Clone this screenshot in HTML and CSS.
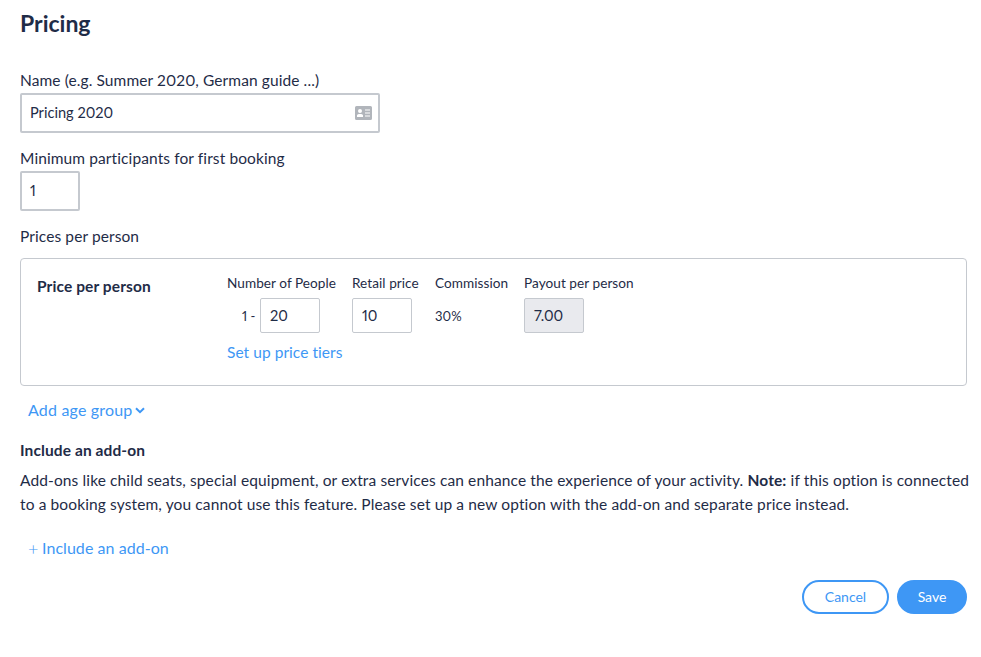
FILE: index.html
```html
<!DOCTYPE html>
<html lang="en">
<head>
<meta charset="utf-8">
<title>Pricing</title>
<link rel="stylesheet" href="styles.css">
</head>
<body>
<main class="page">
  <h1 class="title">Pricing</h1>
  <label class="label label-name">Name (e.g. Summer 2020, German guide ...)</label>
  <div class="field field-name">
    <span class="field-text">Pricing 2020</span>
    <svg class="card-icon" width="17" height="14" viewBox="0 0 17 14"><path fill="#b1b5bb" fill-rule="evenodd" d="M1.5 0h14A1.5 1.5 0 0 1 17 1.5v11a1.5 1.5 0 0 1-1.500 1.500h-14A1.500 1.500 0 0 1 0 12.500v-11A1.500 1.500 0 0 1 1.500 0zM5 3a2 2 0 1 0 0 4 2 2 0 0 0 0-4zM2 11h6V9.500C8 8.500 7 8 5 8S2 8.500 2 9.500zM10 3.500v1h5v-1zM10 6.500v1h5v-1zM10 9.500v1h5v-1z"/></svg>
  </div>
  <label class="label label-min">Minimum participants for first booking</label>
  <div class="field field-min"><span class="field-text">1</span></div>
  <label class="label label-prices">Prices per person</label>
  <section class="price-card">
    <h2 class="price-title">Price per person</h2>
    <div class="price-grid">
      <div class="col col-people">
        <span class="col-head">Number of People</span>
        <div class="col-row people-row"><span class="range">1 -</span><span class="box">20</span></div>
        <a class="link tiers">Set up price tiers</a>
      </div>
      <div class="col col-retail">
        <span class="col-head">Retail price</span>
        <div class="col-row"><span class="box">10</span></div>
      </div>
      <div class="col col-comm">
        <span class="col-head">Commission</span>
        <div class="col-row"><span class="pct">30%</span></div>
      </div>
      <div class="col col-payout">
        <span class="col-head">Payout per person</span>
        <div class="col-row"><span class="box box-off">7.00</span></div>
      </div>
    </div>
  </section>
  <a class="link age">Add age group<svg class="chev" width="10" height="7" viewBox="0 0 10 7"><path d="M1 1.200 5 5.200 9 1.200" fill="none" stroke="#3e97f5" stroke-width="2"/></svg></a>
  <h3 class="addon-title">Include an add-on</h3>
  <p class="addon-text">Add-ons like child seats, special equipment, or extra services can enhance the experience of your activity. <b class="note">Note:</b> if this option is connected to a booking system, you cannot use this feature. Please set up a new option with the add-on and separate price instead.</p>
  <a class="link addon-link"><span class="plus">+</span>Include an add-on</a>
  <div class="actions">
    <button class="btn btn-cancel" type="button">Cancel</button>
    <button class="btn btn-save" type="button">Save</button>
  </div>
</main>
</body>
</html>
```
FILE: styles.css
```css
* { box-sizing: border-box; }
html, body { margin: 0; padding: 0; background: #fff; }
body {
  font-family: "Lato", "Open Sans", sans-serif;
  font-variant-numeric: proportional-nums;
  color: #1f2c47;
  font-size: 15.5px;
  letter-spacing: 0.1px;
  line-height: 20px;
}
.page { padding: 9px 14px 0 20px; height: 657px; overflow: hidden; }
.title { margin: 0; font-size: 23px; line-height: 28px; font-weight: 700; letter-spacing: 0; }
.label { display: block; }
.label-name { margin-top: 33px; }
.field {
  display: flex; align-items: center; justify-content: space-between;
  height: 40px; border: 2px solid #c5c9cf; border-radius: 2px; padding: 0 6px 0 8px;
}
.field-text { font-size: 14.6px; letter-spacing: 0; }
.field-name { width: 360px; margin-top: 3px; }
.field-min { width: 60px; margin-top: 3px; }
.label-min { margin-top: 15px; }
.label-prices { margin-top: 15px; }
.card-icon { display: block; }
.price-card {
  display: flex; margin-top: 12px; height: 128px;
  border: 1px solid #c5c9cf; border-radius: 4px; padding: 18px 16px 0;
}
.price-title { margin: -1px 0 0; width: 190px; font-size: 15.5px; line-height: 20px; font-weight: 700; }
.price-grid { display: flex; font-size: 13.6px; letter-spacing: 0.05px; }
.col { display: flex; flex-direction: column; }
.col-head { height: 22px; line-height: 16px; white-space: nowrap; margin-top: -2px; }
.col-row { display: flex; align-items: center; height: 35px; margin-top: 1px; }
.col-people { width: 125px; }
.col-retail { width: 83px; }
.col-comm { width: 89px; }
.people-row { padding-left: 15px; }
.range { width: 18px; font-size: 13px; white-space: nowrap; }
.box {
  display: flex; align-items: center; width: 60px; height: 35px; padding-left: 9px;
  border: 1px solid #c5c9cf; border-radius: 2px; font-size: 14.6px; letter-spacing: 0;
}
.box-off { background: #e9eaee; }
.pct { font-size: 13px; }
.link { color: #3e97f5; display: block; }
.tiers { margin-top: 9px; font-size: 15.5px; line-height: 20px; white-space: nowrap; }
.age { margin: 14px 0 0 8px; display: flex; align-items: center; gap: 3px; font-size: 16px; letter-spacing: 0.18px; }
.chev { display: block; margin-top: 1px; }
.addon-title { margin: 20px 0 0; font-size: 15.5px; line-height: 20px; font-weight: 700; }
.addon-text { margin: 8px -5px 0 0; line-height: 24px; letter-spacing: 0.12px; }
.note { font-weight: 700; }
.addon-link { display: flex; align-items: center; margin: 22px 0 0 8px; font-size: 16px; letter-spacing: 0.05px; }
.plus { width: 14px; font-size: 18px; font-weight: 300; }
.actions { display: flex; justify-content: flex-end; gap: 8px; margin-top: 22px; }
.btn {
  height: 34px; border-radius: 17px; font: inherit; font-size: 14px; line-height: 18px; padding: 0;
}
.btn-cancel { width: 87px; background: #fff; border: 2px solid #3e97f5; color: #3e97f5; }
.btn-save { width: 70px; background: #3e97f5; border: 2px solid #3e97f5; color: #fff; }
```
